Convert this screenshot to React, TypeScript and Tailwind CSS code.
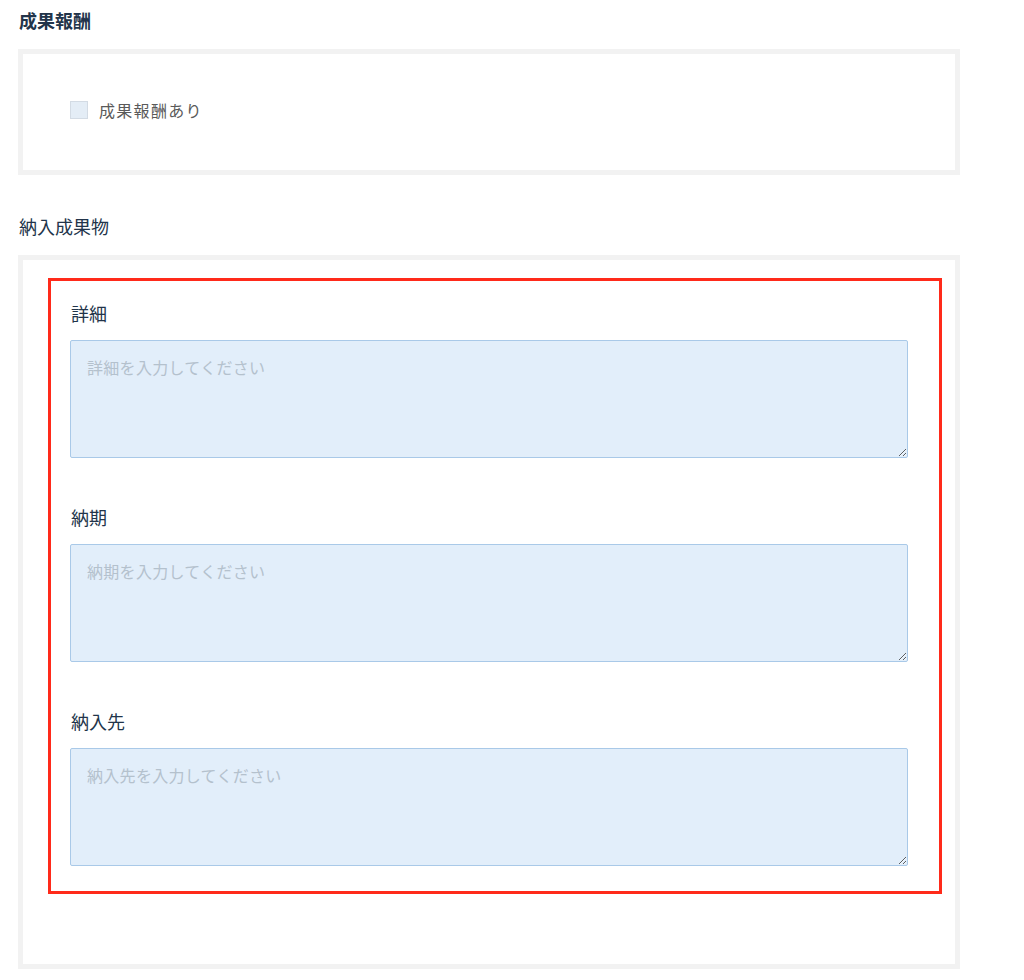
import { useState } from "react";

const fields = [
  { id: "detail", label: "詳細", placeholder: "詳細を入力してください" },
  { id: "deadline", label: "納期", placeholder: "納期を入力してください" },
  { id: "destination", label: "納入先", placeholder: "納入先を入力してください" },
];

export default function App() {
  const [reward, setReward] = useState(false);

  return (
    <div
      className="min-h-[980px] bg-white pt-[8px] text-[#22344a]"
      style={{ fontFamily: '"Noto Sans CJK JP", "Noto Sans", sans-serif' }}
    >
      <div className="ml-[18px] w-[942px]">
        <h2 className="ml-px text-[18px] leading-6 font-bold">成果報酬</h2>

        <div className="mt-[17px] border-[5px] border-[#f2f2f2] pt-[47px] pb-[51px] pl-[47px]">
          <label className="flex items-center">
            <input
              type="checkbox"
              checked={reward}
              onChange={(e) => setReward(e.target.checked)}
              className="h-[18px] w-[18px] appearance-none border border-[#d3dbe4] bg-[#e4edf6]"
            />
            <span className="ml-[11px] text-base leading-[18px] tracking-[1.3px] text-[#5a5a5a]">
              成果報酬あり
            </span>
          </label>
        </div>

        <h2 className="mt-[39px] ml-px text-[18px] leading-6">納入成果物</h2>

        <div className="mt-[17px] border-[5px] border-[#f2f2f2] pt-[18px] pr-[13px] pb-[70px] pl-[25px]">
          <div className="border-[3px] border-[#ff2a1a] pt-[20px] pr-[31px] pb-[25px] pl-[19px]">
            {fields.map((f, i) => (
              <div key={f.id} className={i > 0 ? "mt-[47px]" : ""}>
                <div className="ml-px text-[18px] leading-6">{f.label}</div>
                <textarea
                  placeholder={f.placeholder}
                  className="mt-[15px] block h-[118px] w-full rounded-[2px] border border-[#a9c9e8] bg-[#e2eefa] px-4 py-[16px] text-base leading-5 tracking-[0.3px] text-[#333] placeholder:text-[#b4c1cd] outline-none"
                />
              </div>
            ))}
          </div>
        </div>
      </div>
    </div>
  );
}
